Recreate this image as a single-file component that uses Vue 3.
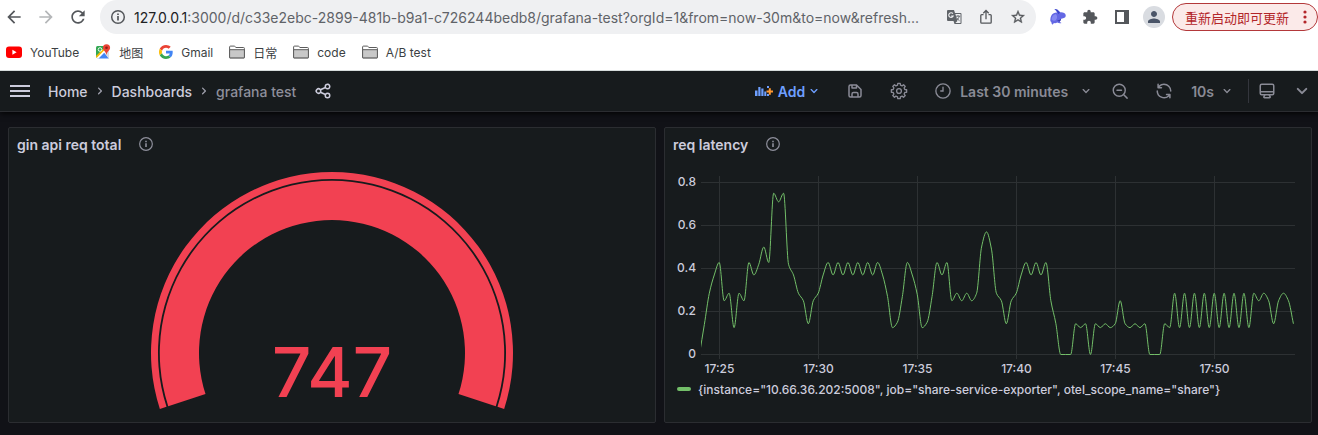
<script setup>
import { computed, onBeforeUnmount, onMounted, ref } from 'vue'

const bookmarks = [
  { icon: 'youtube', label: 'YouTube' },
  { icon: 'maps', label: '地图' },
  { icon: 'google', label: 'Gmail' },
  { icon: 'folder', label: '日常' },
  { icon: 'folder', label: 'code' },
  { icon: 'folder', label: 'A/B test' },
]

const address = ref(':3000/d/c33e2ebc-2899-481b-b9a1-c726244bedb8/grafana-test?orgId=1&from=now-30m&to=now&refresh...')

const ANGLE = 'M17,9.17a1,1,0,0,0-1.41,0L12,12.71,8.46,9.17a1,1,0,0,0-1.41,0,1,1,0,0,0,0,1.42l4.24,4.24a1,1,0,0,0,1.42,0L17,10.59A1,1,0,0,0,17,9.17Z'

// Eight-toothed outline of the settings cog
const cog = (() => {
  const pts = []
  for (let i = 0; i < 8; i++) {
    for (const [off, r] of [[-14, 8], [-9, 10.3], [9, 10.3], [14, 8]]) {
      const a = ((i * 45 + off) * Math.PI) / 180
      pts.push(`${(12 + r * Math.sin(a)).toFixed(2)} ${(12 - r * Math.cos(a)).toFixed(2)}`)
    }
  }
  return `M${pts.join('L')}Z`
})()

// Gauge: arcs run 18 degrees past the horizontal on both sides
const band = (outer, inner) => {
  const c = Math.cos(Math.PI / 10)
  const s = Math.sin(Math.PI / 10)
  const at = (r, side) => `${(182 + side * r * c).toFixed(2)} ${(182 + r * s).toFixed(2)}`
  return `M${at(outer, -1)}A${outer} ${outer} 0 1 1 ${at(outer, 1)}L${at(inner, 1)}A${inner} ${inner} 0 1 0 ${at(inner, -1)}Z`
}
const thresholdBand = band(181, 174)
const valueBand = band(172.2, 133)

// Latency samples, one every 15 seconds
const repeat = (n, ...v) => Array.from({ length: n }, () => v).flat()
const samples = [
  0, 0.14, 0.285, 0.37, 0.428, 0.25, 0.285, 0.125, 0.285, 0.25, 0.428, 0.37, 0.42, 0.5, 0.428,
  0.75, 0.71, 0.75, 0.42, 0.37, 0.285, 0.25, 0.143, 0.25, 0.285, 0.37,
  ...repeat(5, 0.428, 0.37), 0.428, 0.37, 0.27,
  0.125, 0.15, 0.27, 0.428, 0.37, 0.28, 0.125, 0.15, 0.27, 0.428, 0.37, 0.428,
  0.25, 0.285, 0.25, 0.285, 0.25, 0.285, 0.5, 0.57, 0.49, 0.285, 0.25, 0.143, 0.25, 0.285, 0.37,
  0.428, 0.37, 0.428, 0.37, 0.428, 0.25, 0.145, 0, 0, 0,
  0.143, 0.125, 0.143, 0, 0.143, 0.125, 0.143, 0.125, 0.143, 0.25, 0.143, 0.125, 0.143, 0.125, 0.143,
  0, 0, 0, 0.143, 0.125, ...repeat(8, 0.285, 0.125),
  0.285, 0.25, 0.285, 0.25, 0.143, 0.25, 0.285, 0.25, 0.143,
]

const chartBox = ref(null)
const width = ref(646)
let observer
onMounted(() => {
  observer = new ResizeObserver(([entry]) => {
    width.value = Math.round(entry.contentRect.width)
  })
  observer.observe(chartBox.value)
})
onBeforeUnmount(() => observer.disconnect())

const LEFT = 36
const RIGHT = 16
const BASE = 194
const UNIT = 215
const FIRST_TICK = 0.92
const timeX = (min) => LEFT + (min / 30) * (width.value - LEFT - RIGHT)
const valueY = (v) => BASE - v * UNIT

const yTicks = [0.8, 0.6, 0.4, 0.2, 0].map((v) => ({ label: String(v), y: Math.round(valueY(v)) + 0.5 }))
const xTicks = computed(() =>
  ['17:25', '17:30', '17:35', '17:40', '17:45', '17:50'].map((label, i) => ({
    label,
    x: Math.round(timeX(FIRST_TICK + i * 5)) + 0.5,
  })),
)

// Monotone cubic interpolation through the samples
const line = computed(() => {
  const p = samples.map((v, i) => [timeX(FIRST_TICK + (i - 4) * 0.25), valueY(v) + 0.5])
  const n = p.length
  const d = []
  for (let i = 0; i < n - 1; i++) d.push((p[i + 1][1] - p[i][1]) / (p[i + 1][0] - p[i][0]))
  const m = [d[0]]
  for (let i = 1; i < n - 1; i++) {
    m.push(d[i - 1] * d[i] <= 0 ? 0 : (2 * d[i - 1] * d[i]) / (d[i - 1] + d[i]))
  }
  m.push(d[n - 2])
  let path = `M${p[0][0].toFixed(2)} ${p[0][1].toFixed(2)}`
  for (let i = 0; i < n - 1; i++) {
    const h = (p[i + 1][0] - p[i][0]) / 3
    path += `C${(p[i][0] + h).toFixed(2)} ${(p[i][1] + m[i] * h).toFixed(2)} ${(p[i + 1][0] - h).toFixed(2)} ${(p[i + 1][1] - m[i + 1] * h).toFixed(2)} ${p[i + 1][0].toFixed(2)} ${p[i + 1][1].toFixed(2)}`
  }
  return path
})
</script>

<template>
  <div class="window">
    <header class="browser">
      <div class="toolbar">
        <nav class="history" aria-label="History">
          <button type="button" aria-label="Back"><svg width="20" height="20" viewBox="0 0 24 24"><path d="M20 11H7.83l5.59-5.59L12 4l-8 8 8 8 1.41-1.41L7.83 13H20v-2z" /></svg></button>
          <button type="button" class="faded" aria-label="Forward"><svg width="20" height="20" viewBox="0 0 24 24"><path d="M12 4l-1.41 1.41L16.17 11H4v2h12.17l-5.58 5.59L12 20l8-8z" /></svg></button>
          <button type="button" aria-label="Reload"><svg width="20" height="20" viewBox="0 0 24 24"><path d="M17.65 6.35C16.2 4.9 14.21 4 12 4c-4.42 0-7.99 3.58-7.99 8s3.57 8 7.99 8c3.73 0 6.84-2.55 7.73-6h-2.08c-.82 2.33-3.04 4-5.65 4-3.31 0-6-2.69-6-6s2.69-6 6-6c1.66 0 3.14.69 4.22 1.78L13 11h7V4l-2.35 2.35z" /></svg></button>
        </nav>
        <div class="omnibox">
          <button type="button" class="site" aria-label="Site information">
            <svg width="16" height="16" viewBox="0 0 16 16" fill="none" stroke="currentColor" stroke-width="1.5"><circle cx="8" cy="8" r="6.3" /><path d="M8 7v4.4M8 4.4v1.6" stroke-width="1.7" /></svg>
          </button>
          <label class="host" for="address">127.0.0.1</label>
          <input id="address" v-model="address" type="text" class="address" spellcheck="false" />
          <div class="omni-actions">
            <button type="button" aria-label="Translate">
              <svg width="16" height="16" viewBox="0 0 16 16"><path d="M2 1h6l1 3h5.500q1 0 1 1v9q0 1-1 1H8.500L7.500 12H2q-1 0-1-1V2q0-1 1-1z" fill="#5f6368" /><path d="M9.400 5h5.100v9H9.400l2-2z" fill="#eff0f2" /><path d="M6.900 4.700A2.300 2.300 0 1 0 7.200 7H5.200" fill="none" stroke="#eff0f2" stroke-width="1.100" /><path d="M9.700 7.200h4.500M12 6v1.200M13.400 7.200q-.6 2.600-3 4.200M10.700 8.700q1 1.900 2.800 3" fill="none" stroke="#5f6368" stroke-width=".9" /></svg>
            </button>
            <button type="button" aria-label="Share this page">
              <svg width="16" height="16" viewBox="0 0 16 16" fill="none" stroke="currentColor" stroke-width="1.300"><path d="M5.500 5.600H3.700q-.9 0-.9.9v6.800q0 .9.9.9h8.600q.9 0 .9-.9V6.500q0-.9-.9-.9h-1.800M8 10.300V1.800M5.300 4.200L8 1.500l2.700 2.700" /></svg>
            </button>
            <button type="button" aria-label="Bookmark this tab">
              <svg width="16" height="16" viewBox="0 0 24 24"><path d="M22 9.24l-7.19-.62L12 2 9.190 8.630 2 9.240l5.460 4.730L5.820 21 12 17.270 18.180 21l-1.630-7.030L22 9.240zM12 15.400l-3.760 2.270 1-4.280-3.320-2.880 4.380-.38L12 6.100l1.710 4.040 4.380.38-3.320 2.880 1 4.280L12 15.400z" stroke="currentColor" stroke-width=".5" /></svg>
            </button>
          </div>
        </div>
        <div class="extensions">
          <button type="button" aria-label="Rabbit extension">
            <svg width="18" height="18" viewBox="0 0 18 18"><path d="M5.500 1Q8.500.8 11 4.300q4.800-.4 5.700 2.700.3 2.700-2.500 3.300l-2 .5q-.5 1.800-1.600 2.900l1.900 1.300q-2 .8-4.300-.4-1.600.8-3.300.4l-1.300 1.700q-1.400-1-1.300-2.800-1.300-.6-1-2Q1.500 7.500 4.200 5.600q2-1.300 4-1.200Q6.800 2.200 5.500 1z" fill="#6468e4" /><path d="M5.500 1Q8.500.8 11 4.300L9.600 6.200Q8 2.800 5.500 1z" fill="#3b45c9" /><path d="M2.600 11.500q.2-4.600 4.400-5.500 2.300 3.300-.2 6.300-2 1.200-4.200-.8z" fill="#8589f2" /><path d="M8 12.600q2.400-.3 4.200-1.800-.5 1.800-1.600 2.900z" fill="#3c3fae" /></svg>
          </button>
          <button type="button" aria-label="Extensions">
            <svg width="16" height="16" viewBox="0 0 24 24"><path d="M20.500 11H19V7c0-1.100-.9-2-2-2h-4V3.500C13 2.120 11.880 1 10.500 1S8 2.120 8 3.500V5H4c-1.100 0-1.990.9-1.990 2v3.800H3.500c1.490 0 2.700 1.210 2.700 2.700s-1.210 2.700-2.700 2.700H2V20c0 1.100.9 2 2 2h3.800v-1.500c0-1.490 1.210-2.700 2.700-2.700 1.490 0 2.700 1.210 2.700 2.700V22H17c1.100 0 2-.9 2-2v-4h1.500c1.380 0 2.500-1.120 2.500-2.500S21.880 11 20.500 11z" /></svg>
          </button>
          <button type="button" aria-label="Side panel">
            <svg width="16" height="16" viewBox="0 0 16 16"><path d="M1 1h14v14H1zM3 3v10h7V3z" fill-rule="evenodd" /></svg>
          </button>
        </div>
        <button type="button" class="avatar" aria-label="Profile">
          <svg width="18" height="18" viewBox="0 0 24 24"><path d="M12 12c2.210 0 4-1.790 4-4s-1.790-4-4-4-4 1.790-4 4 1.790 4 4 4zm0 2c-2.670 0-8 1.340-8 4v2h16v-2c0-2.660-5.330-4-8-4z" /></svg>
        </button>
        <button type="button" class="relaunch">
          重新启动即可更新
          <svg width="4" height="14" viewBox="0 0 4 14"><circle cx="2" cy="2" r="1.600" /><circle cx="2" cy="7" r="1.600" /><circle cx="2" cy="12" r="1.600" /></svg>
        </button>
      </div>

      <nav class="bookmarks" aria-label="Bookmarks">
        <a v-for="b in bookmarks" :key="b.label" href="#">
          <svg v-if="b.icon === 'youtube'" width="16" height="16" viewBox="0 0 16 16"><rect y="2.500" width="16" height="11.500" rx="3" fill="#f00" /><path d="M6.400 5.800v4.900l4.200-2.450z" fill="#fff" /></svg>
          <svg v-else-if="b.icon === 'maps'" width="16" height="16" viewBox="0 0 16 16"><path d="M2.500 2H10v4L2.500 14q-1.500 0-1.500-1.500V3.500Q1 2 2.500 2z" fill="#34a853" /><path d="M2 14.500L8.500 8l5.500 6.500z" fill="#4285f4" /><path d="M1.300 13.500L10 4.700l1.200 2L3 15z" fill="#fff" /><path d="M10 8.500l4-1.500v6.500q0 .8-.6 1z" fill="#dadce0" /><path d="M1 12L8.500 4.500l1.300 1.300L1.600 14z" fill="#fbbc04" /><circle cx="5" cy="5.500" r="1.800" fill="none" stroke="#fff" stroke-width=".9" /><path d="M11.500.2a3.600 3.600 0 0 1 3.600 3.600c0 2.700-2.900 3.400-3.600 7.200-.7-3.800-3.600-4.500-3.600-7.200A3.600 3.600 0 0 1 11.500.2z" fill="#ea4335" /><circle cx="11.500" cy="3.800" r="1.300" fill="#8f1f18" /></svg>
          <svg v-else-if="b.icon === 'google'" width="14" height="14" viewBox="0 0 48 48"><path fill="#ea4335" d="M24 9.500c3.540 0 6.710 1.220 9.210 3.600l6.850-6.850C35.900 2.380 30.470 0 24 0 14.620 0 6.510 5.380 2.560 13.220l7.980 6.190C12.430 13.720 17.740 9.500 24 9.500z" /><path fill="#4285f4" d="M46.980 24.550c0-1.570-.15-3.090-.38-4.550H24v9.020h12.940c-.58 2.960-2.260 5.480-4.780 7.180l7.730 6c4.510-4.180 7.090-10.360 7.090-17.650z" /><path fill="#fbbc05" d="M10.530 28.590c-.48-1.450-.76-2.990-.76-4.590s.27-3.140.76-4.590l-7.980-6.190C.92 16.460 0 20.120 0 24c0 3.880.92 7.540 2.560 10.780l7.970-6.190z" /><path fill="#34a853" d="M24 48c6.480 0 11.930-2.130 15.890-5.810l-7.730-6c-2.150 1.450-4.920 2.300-8.160 2.300-6.260 0-11.570-4.220-13.470-9.910l-7.980 6.190C6.510 42.620 14.620 48 24 48z" /></svg>
          <svg v-else width="16" height="16" viewBox="0 0 16 16" stroke="#5c5c5c"><path d="M.6 13.500V3q0-.9.900-.9h3.800q.6 0 .9.500l.6.900h7.700q.9 0 .9.900v9.100q0 .4-.4.400H1q-.4 0-.4-.4z" fill="#fff" /><path d="M.6 5.700h14.800v7.800q0 .4-.4.400H1q-.4 0-.4-.4z" fill="#c8c8c8" /></svg>
          <span>{{ b.label }}</span>
        </a>
      </nav>
    </header>

    <main class="grafana">
      <div class="topnav">
        <button type="button" class="menu bright" aria-label="Menu">
          <svg width="20" height="14" viewBox="0 0 20 14"><path d="M0 1h20v2H0zM0 6h20v2H0zM0 11h20v2H0z" /></svg>
        </button>
        <nav class="crumbs" aria-label="Breadcrumbs">
          <a href="#">Home</a>
          <svg width="16" height="16" viewBox="0 0 24 24" class="right"><path :d="ANGLE" /></svg>
          <a href="#">Dashboards</a>
          <svg width="16" height="16" viewBox="0 0 24 24" class="right"><path :d="ANGLE" /></svg>
          <span class="current">grafana test</span>
        </nav>
        <button type="button" class="share bright" aria-label="Share dashboard">
          <svg width="18" height="18" viewBox="0 0 24 24"><path d="M18,14a4,4,0,0,0-3.080,1.480l-5.100-2.350a3.640,3.640,0,0,0,0-2.260l5.100-2.350A4,4,0,1,0,14,6a4.170,4.170,0,0,0,.07.71L8.790,9.140a4,4,0,1,0,0,5.720l5.280,2.430A4.170,4.170,0,0,0,14,18a4,4,0,1,0,4-4Zm0-10a2,2,0,1,1-2,2A2,2,0,0,1,18,4ZM6,14a2,2,0,1,1,2-2A2,2,0,0,1,6,14Zm12,6a2,2,0,1,1,2-2A2,2,0,0,1,18,20Z" /></svg>
        </button>

        <div class="tools">
          <button type="button" class="add">
            <svg width="20" height="16" viewBox="0 0 20 16"><path d="M1 7.500h2.500V13H1zM4.300 4h2.200v9H4.300zM7.300 5.500h2.200V13H7.300zM10.300 8.500h2V13h-2zM13 11h2v2h-2zM13 3h2v2h-2z" /><path d="M12.500 8.500H19M15.800 5.300v6.500" fill="none" stroke="#ff9830" stroke-width="2" /></svg>
            <span>Add</span>
            <svg width="16" height="16" viewBox="0 0 24 24"><path :d="ANGLE" /></svg>
          </button>
          <button type="button" aria-label="Save dashboard">
            <svg width="18" height="18" viewBox="0 0 24 24"><path d="M20.710,9.290l-6-6a1,1,0,0,0-.32-.21A1.090,1.090,0,0,0,14,3H6A3,3,0,0,0,3,6V18a3,3,0,0,0,3,3H18a3,3,0,0,0,3-3V10A1,1,0,0,0,20.710,9.290ZM9,5h4V7H9Zm6,14H9V16a1,1,0,0,1,1-1h4a1,1,0,0,1,1,1Zm4-1a1,1,0,0,1-1,1H17V16a3,3,0,0,0-3-3H10a3,3,0,0,0-3,3v3H6a1,1,0,0,1-1-1V6A1,1,0,0,1,6,5H7V8A1,1,0,0,0,8,9h6a1,1,0,0,0,1-1V6.410l4,4Z" /></svg>
          </button>
          <button type="button" aria-label="Dashboard settings">
            <svg width="18" height="18" viewBox="0 0 24 24" fill="none" stroke="currentColor" stroke-width="1.800" stroke-linejoin="round"><path :d="cog" /><circle cx="12" cy="12" r="3.200" /></svg>
          </button>
          <button type="button" class="range">
            <svg width="18" height="18" viewBox="0 0 24 24" fill="none" stroke="currentColor" stroke-width="1.800" stroke-linecap="round"><circle cx="12" cy="12" r="9.500" /><path d="M12 7v5H9" /></svg>
            <span>Last 30 minutes</span>
            <svg width="16" height="16" viewBox="0 0 24 24"><path :d="ANGLE" /></svg>
          </button>
          <button type="button" class="zoom-out" aria-label="Zoom out">
            <svg width="18" height="18" viewBox="0 0 24 24" fill="none" stroke="currentColor" stroke-width="1.900" stroke-linecap="round"><circle cx="11" cy="11" r="8" /><path d="M17 17l4.500 4.500M8 11h6" /></svg>
          </button>
          <div class="refresh">
            <button type="button" aria-label="Refresh dashboard">
              <svg width="18" height="18" viewBox="0 0 24 24"><path d="M19.910,15.510H15.380a1,1,0,0,0,0,2h2.400A8,8,0,0,1,4,12a1,1,0,0,0-2,0,10,10,0,0,0,16.880,7.230V21a1,1,0,0,0,2,0V16.500A1,1,0,0,0,19.910,15.510ZM12,2A10,10,0,0,0,5.120,4.770V3a1,1,0,0,0-2,0V7.500a1,1,0,0,0,1,1h4.500a1,1,0,0,0,0-2H6.220A8,8,0,0,1,20,12a1,1,0,0,0,2,0A10,10,0,0,0,12,2Z" /></svg>
            </button>
            <button type="button" class="interval">
              <span>10s</span>
              <svg width="16" height="16" viewBox="0 0 24 24"><path :d="ANGLE" /></svg>
            </button>
          </div>
          <div class="view">
            <button type="button" aria-label="Kiosk mode">
              <svg width="18" height="18" viewBox="0 0 24 24"><path d="M19,2H5A3,3,0,0,0,2,5V15a3,3,0,0,0,3,3H7.640l-.58,1a2,2,0,0,0,0,2,2,2,0,0,0,1.750,1h6.460A2,2,0,0,0,17,21a2,2,0,0,0,0-2l-.59-1H19a3,3,0,0,0,3-3V5A3,3,0,0,0,19,2ZM8.770,20,10,18H14l1.200,2ZM20,15a1,1,0,0,1-1,1H5a1,1,0,0,1-1-1V14H20Zm0-3H4V5A1,1,0,0,1,5,4H19a1,1,0,0,1,1,1Z" /></svg>
            </button>
            <button type="button" aria-label="Hide top bar">
              <svg width="24" height="24" viewBox="0 0 24 24"><path :d="ANGLE" /></svg>
            </button>
          </div>
        </div>
      </div>

      <div class="dashboard">
        <section class="panel">
          <header class="panel-head">
            <h2>gin api req total</h2>
            <svg width="16" height="16" viewBox="0 0 24 24" fill="none" stroke="currentColor" stroke-width="1.800"><circle cx="12" cy="12" r="9.500" /><path d="M12 11v5.500M12 7.300v2" stroke-width="2.400" /></svg>
          </header>
          <svg class="gauge" width="364" height="250" viewBox="0 0 364 250" role="img" aria-label="747">
            <path :d="thresholdBand" />
            <path :d="valueBand" />
            <text x="182" y="226" text-anchor="middle" class="gauge-value">747</text>
          </svg>
        </section>

        <section class="panel">
          <header class="panel-head">
            <h2>req latency</h2>
            <svg width="16" height="16" viewBox="0 0 24 24" fill="none" stroke="currentColor" stroke-width="1.800"><circle cx="12" cy="12" r="9.500" /><path d="M12 11v5.500M12 7.300v2" stroke-width="2.400" /></svg>
          </header>
          <div ref="chartBox" class="chart">
            <svg :width="width" height="218" :viewBox="`0 0 ${width} 218`">
              <defs>
                <clipPath id="plot-area"><rect :x="LEFT" y="10" :width="width - LEFT - RIGHT" height="188" /></clipPath>
              </defs>
              <g class="grid">
                <line v-for="t in yTicks" :key="t.label" :x1="LEFT" :x2="width - RIGHT" :y1="t.y" :y2="t.y" />
                <line v-for="t in xTicks" :key="t.label" :x1="t.x" :x2="t.x" y1="16" y2="199" />
              </g>
              <path :d="line" class="series" clip-path="url(#plot-area)" />
              <g class="ticks">
                <text v-for="t in yTicks" :key="t.label" x="31" :y="t.y + 3.500" text-anchor="end">{{ t.label }}</text>
                <text v-for="t in xTicks" :key="t.label" :x="t.x" y="213" text-anchor="middle">{{ t.label }}</text>
              </g>
            </svg>
          </div>
          <div class="legend">
            <span class="swatch"></span>
            <span>{instance="10.66.36.202:5008", job="share-service-exporter", otel_scope_name="share"}</span>
          </div>
        </section>
      </div>
    </main>
  </div>
</template>

<style>
body {
  margin: 0;
  background: #111217;
}
</style>

<style scoped>
.window {
  min-height: 100vh;
  display: flex;
  flex-direction: column;
  font-family: Inter, "Noto Sans CJK SC", sans-serif;
}

button {
  display: flex;
  align-items: center;
  margin: 0;
  padding: 0;
  border: 0;
  background: none;
  color: inherit;
  font: inherit;
  white-space: nowrap;
}

a {
  color: inherit;
  text-decoration: none;
}

svg {
  display: block;
  flex: none;
  fill: currentColor;
}

svg[fill="none"] {
  fill: none;
}

.browser {
  position: relative;
  z-index: 1;
  background: #fff;
  color: #54575b;
  border-bottom: 1px solid #d5dbdb;
}

.toolbar {
  display: flex;
  align-items: center;
  height: 34px;
}

.history {
  display: flex;
  gap: 12px;
  padding: 0 12px 0 4px;
}

.faded {
  color: #b4b6b8;
}

.omnibox {
  flex: 1;
  min-width: 0;
  height: 34px;
  box-sizing: border-box;
  display: flex;
  align-items: center;
  padding: 0 10px;
  border-radius: 17px;
  background: #eff0f2;
  font-size: 14px;
}

.site {
  margin-right: 8px;
}

.host {
  color: #202124;
}

.address {
  flex: 1;
  min-width: 0;
  padding: 0;
  border: 0;
  outline: 0;
  background: none;
  color: #5f6368;
  font: inherit;
}

.omni-actions {
  display: flex;
  gap: 16px;
  margin-left: 16px;
}

.extensions {
  display: flex;
  align-items: center;
  gap: 16px;
  margin-left: 13px;
}

.extensions button:first-child {
  margin-right: -1px;
}

.avatar {
  justify-content: center;
  width: 22px;
  height: 22px;
  margin-left: 13px;
  border-radius: 50%;
  background: #d9dce1;
  color: #4a5568;
}

.relaunch {
  gap: 14px;
  height: 28px;
  margin-left: 7px;
  padding: 0 10px 0 12px;
  border: 1px solid #b3383a;
  border-radius: 14px;
  background: #fbeae9;
  color: #b3262a;
  font-size: 13px;
}

.bookmarks {
  display: flex;
  align-items: center;
  gap: 16px;
  height: 36px;
  padding: 0 6px;
  color: #3c3f43;
  font-size: 12px;
}

.bookmarks a {
  display: flex;
  align-items: center;
  gap: 8px;
}

.grafana {
  flex: 1;
  background: #111217;
  color: #ccccdc;
}

.topnav {
  display: flex;
  align-items: center;
  height: 40px;
  padding: 0 4px 0 10px;
  border-bottom: 1px solid #2b2d31;
  background: #171b1d;
  box-shadow: 0 1px 6px #000;
  font-size: 14px;
  font-weight: 500;
}

.bright {
  color: #ccccdc;
}

.crumbs {
  display: flex;
  align-items: center;
  gap: 4px;
  margin-left: 18px;
}

.right {
  color: #9c9da9;
  transform: rotate(-90deg);
}

.current {
  color: #8e8f9b;
}

.share {
  margin-left: 18px;
}

.tools {
  display: flex;
  align-items: center;
  gap: 26px;
  margin-left: auto;
  color: #8a8b96;
  font-weight: 600;
}

.add {
  gap: 4px;
  margin-right: -2px;
  color: #6e9fff;
}

.add svg:last-child {
  margin-left: -3px;
}

.range {
  gap: 8px;
}

.range svg:last-child {
  margin-left: 2px;
}

.zoom-out {
  margin-left: -9px;
}

.refresh {
  display: flex;
  align-items: center;
  gap: 18px;
}

.interval {
  gap: 5px;
}

.view {
  display: flex;
  align-items: center;
  gap: 14px;
  height: 24px;
  margin-left: -13px;
  padding-left: 9px;
  border-left: 1px solid #34363d;
}

.dashboard {
  display: flex;
  gap: 8px;
  padding: 15px 6px 12px 8px;
}

.panel {
  flex: 1;
  min-width: 0;
  min-height: 294px;
  border: 1px solid #2b2d31;
  border-radius: 2px;
  background: #171b1d;
}

.panel-head {
  display: flex;
  align-items: center;
  gap: 17px;
  height: 32px;
  padding: 0 8px;
  color: #8e8f9b;
}

.panel-head h2 {
  margin: 0;
  color: #ccccdc;
  font-size: 14px;
  font-weight: 600;
}

.gauge {
  margin: 11px auto 0;
  fill: #f24152;
}

.gauge-value {
  font-size: 69px;
  font-weight: 500;
}

.grid line {
  stroke: #2d3133;
}

.series {
  fill: none;
  stroke: #73bf69;
  stroke-width: 1;
}

.ticks {
  fill: #ccccdc;
  font-size: 12px;
  font-weight: 500;
}

.legend {
  display: flex;
  align-items: center;
  gap: 7px;
  height: 22px;
  padding: 0 12px;
  font-size: 12px;
  font-weight: 500;
  white-space: nowrap;
}

.swatch {
  width: 14px;
  height: 4px;
  border-radius: 2px;
  background: #73bf69;
}
</style>
